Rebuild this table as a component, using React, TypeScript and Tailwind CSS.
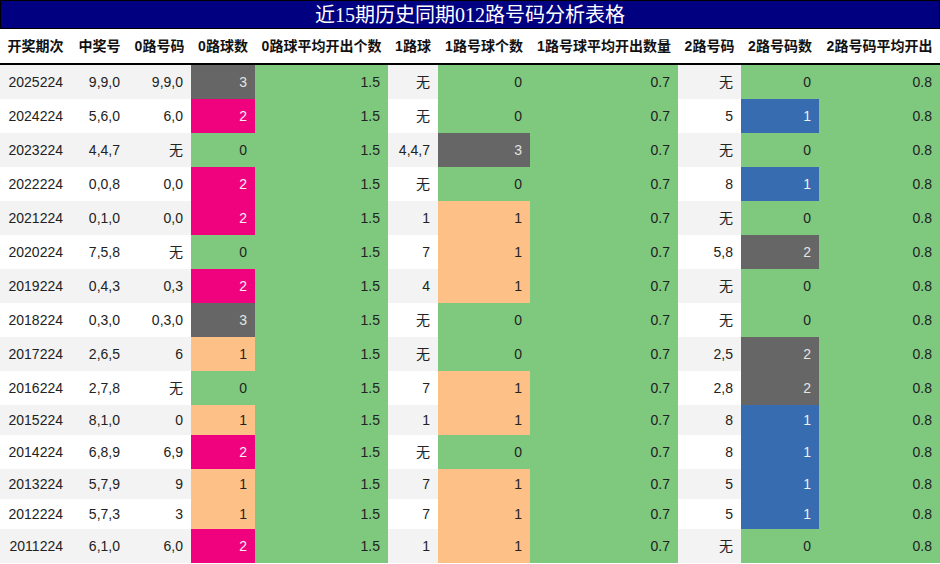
import React from "react";

type Row = {
  period: string;
  num: string;
  r0: string;
  c0: number;
  r1: string;
  c1: number;
  r2: string;
  c2: number;
};

const rows: Row[] = [
  { period: "2025224", num: "9,9,0", r0: "9,9,0", c0: 3, r1: "无", c1: 0, r2: "无", c2: 0 },
  { period: "2024224", num: "5,6,0", r0: "6,0", c0: 2, r1: "无", c1: 0, r2: "5", c2: 1 },
  { period: "2023224", num: "4,4,7", r0: "无", c0: 0, r1: "4,4,7", c1: 3, r2: "无", c2: 0 },
  { period: "2022224", num: "0,0,8", r0: "0,0", c0: 2, r1: "无", c1: 0, r2: "8", c2: 1 },
  { period: "2021224", num: "0,1,0", r0: "0,0", c0: 2, r1: "1", c1: 1, r2: "无", c2: 0 },
  { period: "2020224", num: "7,5,8", r0: "无", c0: 0, r1: "7", c1: 1, r2: "5,8", c2: 2 },
  { period: "2019224", num: "0,4,3", r0: "0,3", c0: 2, r1: "4", c1: 1, r2: "无", c2: 0 },
  { period: "2018224", num: "0,3,0", r0: "0,3,0", c0: 3, r1: "无", c1: 0, r2: "无", c2: 0 },
  { period: "2017224", num: "2,6,5", r0: "6", c0: 1, r1: "无", c1: 0, r2: "2,5", c2: 2 },
  { period: "2016224", num: "2,7,8", r0: "无", c0: 0, r1: "7", c1: 1, r2: "2,8", c2: 2 },
  { period: "2015224", num: "8,1,0", r0: "0", c0: 1, r1: "1", c1: 1, r2: "8", c2: 1 },
  { period: "2014224", num: "6,8,9", r0: "6,9", c0: 2, r1: "无", c1: 0, r2: "8", c2: 1 },
  { period: "2013224", num: "5,7,9", r0: "9", c0: 1, r1: "7", c1: 1, r2: "5", c2: 1 },
  { period: "2012224", num: "5,7,3", r0: "3", c0: 1, r1: "7", c1: 1, r2: "5", c2: 1 },
  { period: "2011224", num: "6,1,0", r0: "6,0", c0: 2, r1: "1", c1: 1, r2: "无", c2: 0 },
];

const headers = [
  "开奖期次",
  "中奖号",
  "0路号码",
  "0路球数",
  "0路球平均开出个数",
  "1路球",
  "1路号球个数",
  "1路号球平均开出数量",
  "2路号码",
  "2路号码数",
  "2路号码平均开出",
];

const cols =
  "grid grid-cols-[71px_57px_63px_64px_133px_50px_92px_148px_63px_78px_121px]";

function color0(n: number) {
  switch (n) {
    case 0:
      return "bg-[#7fc97f] text-[#222]";
    case 1:
      return "bg-[#fdc086] text-[#222]";
    case 2:
      return "bg-[#f0027f] text-[#f4f4f4]";
    default:
      return "bg-[#666666] text-[#e4e4e4]";
  }
}

function color1(n: number) {
  switch (n) {
    case 0:
      return "bg-[#7fc97f] text-[#222]";
    case 1:
      return "bg-[#fdc086] text-[#222]";
    default:
      return "bg-[#666666] text-[#e4e4e4]";
  }
}

function color2(n: number) {
  switch (n) {
    case 0:
      return "bg-[#7fc97f] text-[#222]";
    case 1:
      return "bg-[#386cb0] text-[#f0f0f0]";
    default:
      return "bg-[#666666] text-[#e4e4e4]";
  }
}

function Cell({ children, className = "" }: { children: React.ReactNode; className?: string }) {
  return <div className={`flex items-center justify-end pr-2 ${className}`}>{children}</div>;
}

export default function App() {
  return (
    <div
      className="w-[940px] bg-white text-[14px] text-[#222]"
      style={{ fontFamily: '"Liberation Sans", "Noto Sans CJK SC", sans-serif' }}
    >
      <div
        className="h-[29px] bg-[#000080] border border-black flex items-center justify-center text-[20px] text-white leading-none"
        style={{ fontFamily: '"Liberation Serif", "Noto Sans CJK SC", serif' }}
      >
        近15期历史同期012路号码分析表格
      </div>

      <div className={`${cols} h-[36px] border-b-2 border-black font-bold text-[#111]`}>
        {headers.map((h) => (
          <div key={h} className="flex items-center justify-center whitespace-nowrap">
            {h}
          </div>
        ))}
      </div>

      {rows.map((r, i) => {
        const tall = [r.r0, r.r1, r.r2].includes("无");
        return (
          <div
            key={r.period}
            className={`${cols} ${tall ? "h-[34px]" : "h-[30px]"} ${i % 2 === 0 ? "bg-[#f3f3f3]" : "bg-white"}`}
          >
            <Cell>{r.period}</Cell>
            <Cell>{r.num}</Cell>
            <Cell>{r.r0}</Cell>
            <Cell className={color0(r.c0)}>{r.c0}</Cell>
            <Cell className="bg-[#7fc97f]">1.5</Cell>
            <Cell>{r.r1}</Cell>
            <Cell className={color1(r.c1)}>{r.c1}</Cell>
            <Cell className="bg-[#7fc97f]">0.7</Cell>
            <Cell>{r.r2}</Cell>
            <Cell className={color2(r.c2)}>{r.c2}</Cell>
            <Cell className="bg-[#7fc97f]">0.8</Cell>
          </div>
        );
      })}
    </div>
  );
}
